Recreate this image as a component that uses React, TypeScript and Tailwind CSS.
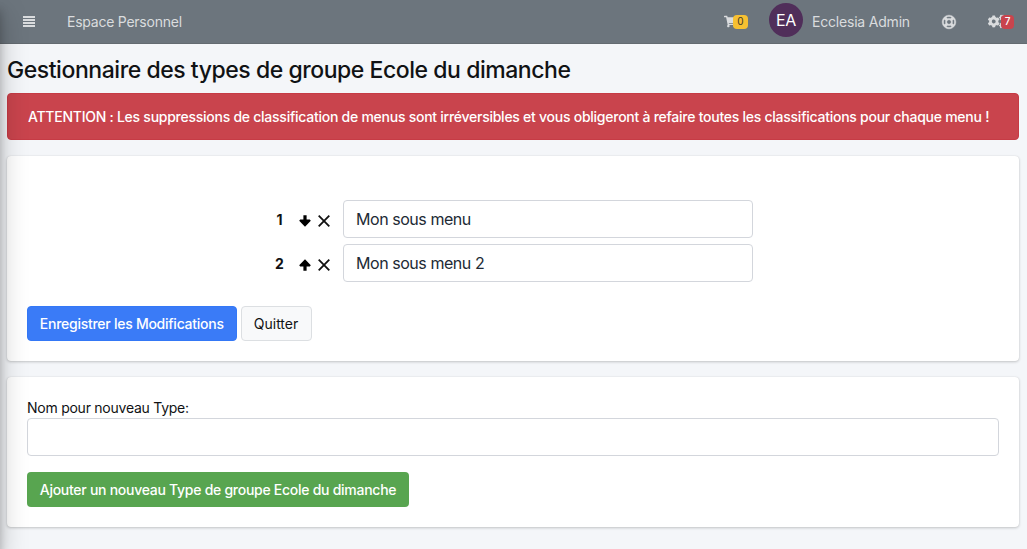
import React from "react";
import { FaShoppingCart, FaRegLifeRing, FaCogs } from "react-icons/fa";

type MenuItem = { rank: number; label: string; direction: "up" | "down" };

const items: MenuItem[] = [
  { rank: 1, label: "Mon sous menu", direction: "down" },
  { rank: 2, label: "Mon sous menu 2", direction: "up" },
];

function MenuIcon() {
  return (
    <svg viewBox="0 0 12 11" className="ml-[23px] h-[11px] w-3" fill="currentColor">
      <path d="M0 0h12v1.9H0zM0 3.05h12v1.9H0zM0 6.1h12v1.9H0zM0 9.1h12v1.9H0z" />
    </svg>
  );
}

function ArrowIcon({ direction }: { direction: "up" | "down" }) {
  return (
    <svg viewBox="0 0 12 12" className={direction === "up" ? "size-3" : "size-3 rotate-180"} fill="#000">
      <path d="M6 0.2 11.8 6.2 10.8 7.4H7.6V11.8H4.4V7.4H1.2L0.2 6.2Z" />
    </svg>
  );
}

function CrossIcon() {
  return (
    <svg viewBox="0 0 12 12" className="size-3" fill="none" stroke="#111" strokeWidth="1.8">
      <path d="M0.7 0.7 11.3 11.3M11.3 0.7 0.7 11.3" />
    </svg>
  );
}

function Header() {
  return (
    <header className="flex h-11 items-center border-b border-[#646b71] bg-[#6c757d] text-[#dadcde]">
      <MenuIcon />
      <span className="ml-8 text-[14px] leading-5 tracking-[-0.24px]">Espace Personnel</span>
      <div className="ml-auto flex items-center">
        <div className="flex w-[25px] items-center">
          <FaShoppingCart className="size-[13px] shrink-0" />
          <span className="z-10 -ml-[4px] flex h-[14px] w-[15px] shrink-0 items-center justify-center rounded-[4px] bg-[#f7c032] text-[10px] text-[#42392a]">0</span>
        </div>
        <div className="mb-1 ml-5 flex size-[34px] items-center justify-center rounded-full bg-[#502e5a] text-[16px] tracking-[-0.3px] text-white">EA</div>
        <span className="ml-[9px] w-[98px] whitespace-nowrap text-[14px] leading-5 tracking-[-0.2px]">Ecclesia Admin</span>
        <FaRegLifeRing className="ml-8 size-[14px] overflow-visible" stroke="currentColor" strokeWidth="18" />
        <div className="ml-8 mr-[13px] flex w-[26px] items-center">
          <FaCogs className="size-[17px] shrink-0" />
          <span className="z-10 -ml-[4px] flex h-[14px] w-[13px] shrink-0 items-center justify-center rounded-[4px] bg-[#c9444d] text-[10px] font-medium text-white">7</span>
        </div>
      </div>
    </header>
  );
}

export default function App() {
  return (
    <div className="relative h-[549px] w-[1027px] overflow-hidden bg-[#f4f6f9] font-['Inter','Liberation_Sans',sans-serif] text-[#101214]">
      <Header />
      <main className="pl-[7px] pr-2">
        <h1 className="pt-[11px] text-[23px] font-medium leading-[30px] tracking-[-0.45px]">
          Gestionnaire des types de groupe Ecole du dimanche
        </h1>
        <div className="mt-2 flex h-[47px] items-center whitespace-nowrap rounded-[4px] border border-[#c63b45] bg-[#c9444d] pl-5 text-[14px] font-medium tracking-[-0.255px] text-white">
          ATTENTION : Les suppressions de classification de menus sont irréversibles et vous obligeront à refaire toutes les classifications pour chaque menu !
        </div>
        <section className="mt-4 h-[205px] rounded-[4px] bg-white px-5 pt-11 shadow-[0_0_1px_rgba(0,0,0,0.125),0_1px_3px_rgba(0,0,0,0.2)]">
          <div className="flex flex-col gap-1.5">
            {items.map((item) => (
              <div key={item.rank} className="flex h-[38px] items-center">
                <span className="ml-[247px] w-[11px] text-center text-[14px] font-bold">{item.rank}</span>
                <div className="ml-[14px] mt-[3px] flex gap-[7px]">
                  <ArrowIcon direction={item.direction} />
                  <CrossIcon />
                </div>
                <input
                  defaultValue={item.label}
                  className="ml-[13px] h-[38px] w-[410px] rounded-[4px] border border-[#d3d6dc] bg-white px-3 text-[16px] tracking-[-0.45px] text-[#212a35] outline-none"
                />
              </div>
            ))}
          </div>
          <div className="mt-6 flex gap-1">
            <button className="h-[35px] w-[209.5px] whitespace-nowrap rounded-[4px] border border-[#3478f6] bg-[#3a7bf7] text-[14px] font-medium tracking-[-0.26px] text-white">
              Enregistrer les Modifications
            </button>
            <button className="h-[35px] w-[71px] whitespace-nowrap rounded-[4px] border border-[#dcdfe2] bg-[#f8f9fa] text-[14px] tracking-[-0.03px]">
              Quitter
            </button>
          </div>
        </section>
        <section className="mt-4 h-[150px] rounded-[4px] bg-white px-5 pt-5 shadow-[0_0_1px_rgba(0,0,0,0.125),0_1px_3px_rgba(0,0,0,0.2)]">
          <label htmlFor="type-name" className="block h-[21px] text-[14px] leading-[22px] tracking-[-0.25px]">Nom pour nouveau Type:</label>
          <input id="type-name" className="block h-[38px] w-full rounded-[4px] border border-[#d3d6dc] bg-white px-3 outline-none" />
          <button className="mt-4 h-[35px] w-[382px] whitespace-nowrap rounded-[4px] bg-[#58a550] text-[14px] font-medium tracking-[-0.27px] text-white">
            Ajouter un nouveau Type de groupe Ecole du dimanche
          </button>
        </section>
      </main>
      <div className="pointer-events-none absolute -left-5 top-0 h-full w-5 shadow-[0_14px_28px_rgba(0,0,0,0.25),0_10px_10px_rgba(0,0,0,0.22)]" />
    </div>
  );
}
